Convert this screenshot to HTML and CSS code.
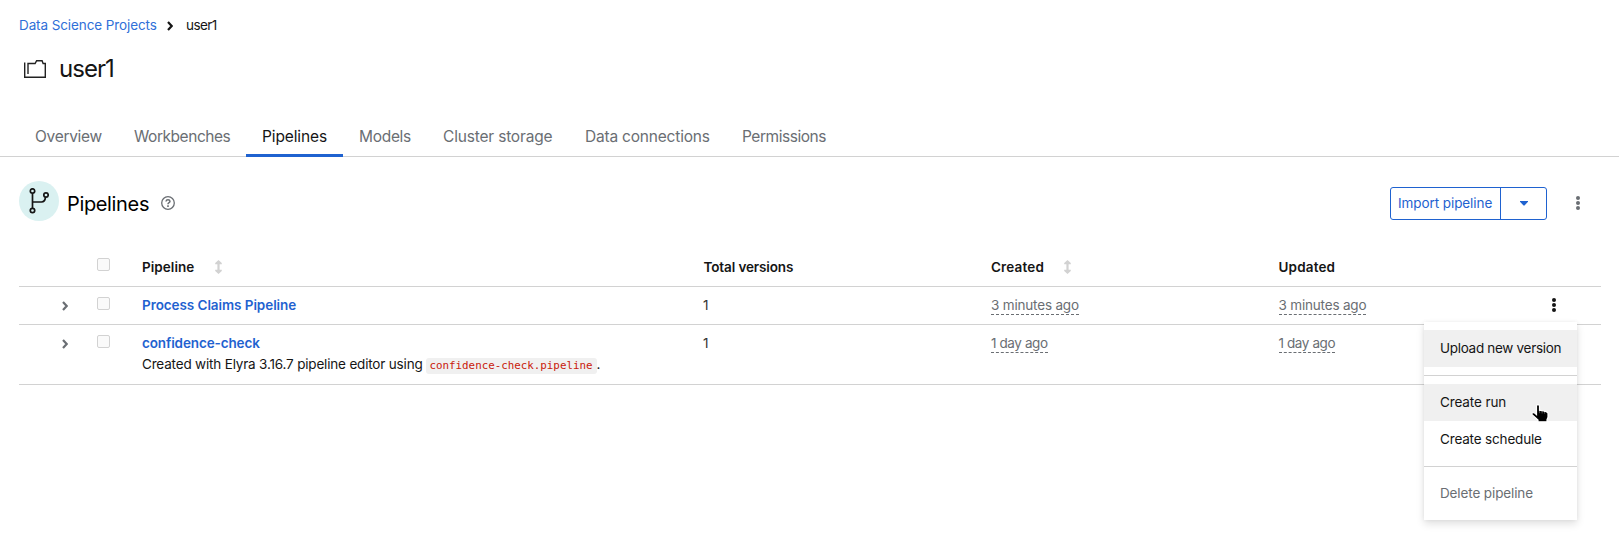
FILE: index.html
```html
<!DOCTYPE html>
<html lang="en">
<head>
<meta charset="utf-8">
<title>user1 - Pipelines</title>
<link rel="stylesheet" href="styles.css">
</head>
<body>
<nav class="crumbs">
  <a class="crumb-link">Data Science Projects</a>
  <svg class="crumb-sep" width="6" height="10" viewBox="0 0 6 10"><path d="M1 1l3.700 4L1 9" fill="none" stroke="#151515" stroke-width="2.200"/></svg>
  <span class="crumb-here">user1</span>
</nav>
<header class="title">
  <svg width="22" height="18" viewBox="0 0 22 18" fill="none"><path d="M.7 2.500v14.800h20.600V3.500h-2.200l-1-2.800h-5.500l-1.500 2.800H4v10.500" stroke="#222" stroke-width="1.400"/></svg>
  <h1 class="project">user1</h1>
</header>
<div class="tabs">
  <a class="tab t-overview">Overview</a>
  <a class="tab t-work">Workbenches</a>
  <a class="tab t-pipe active">Pipelines</a>
  <a class="tab t-models">Models</a>
  <a class="tab t-cluster">Cluster storage</a>
  <a class="tab t-data">Data connections</a>
  <a class="tab t-perm">Permissions</a>
</div>
<section class="toolbar">
  <span class="badge"><svg width="20" height="26" viewBox="0 0 20 26" fill="none" stroke="#151515" stroke-width="1.700"><circle cx="3.500" cy="3" r="2.200"/><circle cx="3.500" cy="22.500" r="2.200"/><circle cx="17" cy="7" r="2.200"/><path d="M3.500 5.200v15.100M3.500 14h9q3.500 0 4-4.800"/></svg></span>
  <h2 class="heading">Pipelines</h2>
  <svg class="help" width="14" height="14" viewBox="0 0 14 14" fill="none" stroke="#6a6e73"><circle cx="7" cy="7" r="6.300" stroke-width="1.300"/><path d="M5 5.500q.2-1.700 2-1.700t2 1.500q0 1-1.200 1.500-.8.400-.8 1.400" stroke-width="1.500"/><path d="M7 9.300v1.600" stroke-width="1.600"/></svg>
  <div class="split"><button class="import">Import pipeline</button><button class="drop"><svg width="8" height="5" viewBox="0 0 8 5"><path d="M0 0h8v.8L4.500 4.500h-1L0 .8z" fill="#1f62d0"/></svg></button></div>
  <svg class="kebab" width="4" height="14" viewBox="0 0 4 14" fill="#6a6e73"><circle cx="2" cy="2" r="2"/><circle cx="2" cy="7" r="2"/><circle cx="2" cy="12" r="2"/></svg>
</section>
<main class="table">
  <div class="row head">
    <span></span><i class="check"></i>
    <div class="cell"><b class="w-pipeline">Pipeline</b><svg class="sort" width="7" height="14" viewBox="0 0 7 14"><path d="M3.500 0L6.800 3v1.200H4.600v5.600h2.200V11L3.500 14 .2 11V9.800h2.200V4.200H.2V3z" fill="#d2d2d2"/></svg></div>
    <div class="cell"><b class="w-total">Total versions</b></div>
    <div class="cell"><b class="w-created">Created</b><svg class="sort" width="7" height="14" viewBox="0 0 7 14"><path d="M3.500 0L6.800 3v1.200H4.600v5.600h2.200V11L3.500 14 .2 11V9.800h2.200V4.200H.2V3z" fill="#d2d2d2"/></svg></div>
    <div class="cell"><b class="w-created">Updated</b></div>
  </div>
  <div class="row">
    <svg class="expand" width="6" height="10" viewBox="0 0 6 10"><path d="M1 1l3.700 4L1 9" fill="none" stroke="#6a6e73" stroke-width="2.200"/></svg><i class="check"></i>
    <div class="cell"><a class="name">Process Claims Pipeline</a></div>
    <div class="cell count">1</div>
    <div class="cell"><span class="ago">3 minutes ago</span></div>
    <div class="cell"><span class="ago">3 minutes ago</span></div>
    <svg class="row-kebab" width="4" height="14" viewBox="0 0 4 14" fill="#151515"><circle cx="2" cy="2" r="2"/><circle cx="2" cy="7" r="2"/><circle cx="2" cy="12" r="2"/></svg>
  </div>
  <div class="row tall">
    <svg class="expand" width="6" height="10" viewBox="0 0 6 10"><path d="M1 1l3.700 4L1 9" fill="none" stroke="#6a6e73" stroke-width="2.200"/></svg><i class="check"></i>
    <div class="cell stack"><a class="name">confidence-check</a><p class="desc"><span class="desc-text">Created with Elyra 3.16.7 pipeline editor using</span><code>confidence-check.pipeline</code>.</p></div>
    <div class="cell count">1</div>
    <div class="cell"><span class="ago day">1 day ago</span></div>
    <div class="cell"><span class="ago day">1 day ago</span></div>
  </div>
</main>
<div class="menu">
  <a class="item lit m-upload">Upload new version</a>
  <hr>
  <a class="item lit">Create run</a>
  <a class="item m-sched">Create schedule</a>
  <hr>
  <a class="item off">Delete pipeline</a>
</div>
<svg class="cursor" width="19" height="20" viewBox="0 0 19 20"><path d="M5.500 2.300Q5.500.7 7 .7t1.500 1.600V6.500q1.700-.6 2.600.4 1.600-.5 2.500.6 1.500-.4 2.300.6 1.100.3 1.100 1.700v3.400l-1 2.500v2.100H7v-1.800L1.300 10.900q-.9-1.500.3-2.200 1.200-.5 2.100.4l1.800 1.600z" fill="#000" stroke="#fff" stroke-width="1.200"/><path d="M8.600 6.800v2.400M11.100 7.300v2.200M13.600 7.900v1.800" stroke="#777" stroke-width=".6"/></svg>
</body>
</html>
```
FILE: styles.css
```css
* { box-sizing: border-box; }
body { margin: 0; height: 537px; overflow: hidden; background: #fff; color: #151515; font: 13.5px/21px Inter, "Liberation Sans", sans-serif; position: relative; }
h1, h2, p { margin: 0; font-weight: 400; }
.crumbs { display: flex; align-items: center; height: 21px; margin: 15px 0 0 19px; }
.crumb-link { width: 138px; color: #2f6fd8; white-space: nowrap; letter-spacing: -.1px; }
.crumb-sep { margin: 0 13px 0 10px; }
.crumb-here { letter-spacing: -.6px; }
.title { display: flex; align-items: center; height: 32px; margin: 17px 0 0 24px; gap: 13px; }
.project { font-size: 24px; line-height: 32px; letter-spacing: -.95px; }
.tabs { display: flex; height: 41px; margin-top: 31px; padding: 0 19px; border-bottom: 1px solid #d2d2d2; }
.tab { height: 41px; padding: 8px 16px; font-size: 15.5px; line-height: 25px; color: #6a6e73; white-space: nowrap; letter-spacing: -.3px; }
.t-overview { width: 99px; }
.t-work { width: 128px; letter-spacing: -.45px; }
.t-pipe { width: 97px; letter-spacing: -.12px; }
.t-models { width: 84px; }
.t-cluster { width: 142px; letter-spacing: -.18px; }
.t-data { width: 157px; letter-spacing: -.2px; }
.t-perm { letter-spacing: -.45px; }
.active { color: #151515; border-bottom: 3px solid #1f62d0; }
.toolbar { display: flex; height: 40px; margin: 24px 39px 0 19px; }
.badge { display: flex; width: 40px; height: 40px; border-radius: 50%; background: #daf1f1; align-items: center; justify-content: center; }
.heading { width: 86px; margin: 8px 0 0 8px; font-size: 20px; line-height: 30px; letter-spacing: -.35px; color: #000; }
.help { margin: 15px 0 0 8px; }
.split { display: flex; margin: 6px 29px 0 auto; width: 157px; height: 33px; border: 1px solid #1f62d0; border-radius: 3px; }
.import, .drop { border: 0; background: none; padding: 0; font: inherit; color: #1f62d0; }
.import { width: 110px; padding: 0 0 1px 7px; text-align: left; white-space: nowrap; letter-spacing: -.08px; border-right: 1px solid #1f62d0; }
.drop { display: flex; flex: 1; align-items: center; justify-content: center; }
.kebab { margin-top: 15px; }
.table { margin: 25px 18px 0 19px; }
.row { display: grid; grid-template-columns: 78px 45px 561.5px 287.5px 287.5px 1fr 49px; height: 38px; border-bottom: 1px solid #d2d2d2; padding-top: 8px; }
.head { height: 41px; padding-top: 11px; }
.tall { height: 60px; }
.cell { display: flex; align-items: flex-start; white-space: nowrap; }
.cell b { font-weight: 600; }
.w-pipeline { width: 53px; letter-spacing: .05px; }
.w-total { letter-spacing: -.12px; }
.w-created { min-width: 53px; letter-spacing: .15px; }
.count { margin-left: -.5px; color: #333; }
.check { width: 13px; height: 13px; margin-top: 2px; border: 1px solid #d2d2d2; border-radius: 2px; background: #fafafa; }
.head .check { margin-top: 1px; }
.sort { margin: 3px 0 0 20px; }
.expand { margin: 6px 0 0 43px; }
.name { color: #1f62d0; font-weight: 600; letter-spacing: -.07px; }
.stack { flex-direction: column; }
.stack .name { letter-spacing: -.12px; }
.ago { color: #6a6e73; height: 20px; border-bottom: 1px dashed #6a6e73; letter-spacing: -.18px; }
.day { letter-spacing: -.4px; }
.row-kebab { margin-top: 3px; }
.desc { display: flex; }
.desc-text { width: 284px; letter-spacing: -.18px; }
code { width: 171px; height: 16px; margin-top: 4px; margin-left: -.5px; padding-left: 4px; border-radius: 3px; background: #f0f0f0; color: #c9190b; font: 10.83px/15px "DejaVu Sans Mono", monospace; }
.menu { position: absolute; left: 1424px; top: 322px; width: 153px; height: 198px; padding-top: 8px; background: #fff; box-shadow: 0 4px 8px rgba(3,3,3,.12), 0 0 4px rgba(3,3,3,.06); }
.item { display: block; height: 37px; padding: 8px 16px; white-space: nowrap; letter-spacing: -.12px; }
.m-upload { letter-spacing: -.3px; }
.m-sched { letter-spacing: -.17px; }
.lit { background: #f0f0f0; }
.off { color: #6a6e73; }
.menu hr { margin: 8px 0; border: 0; height: 1px; background: #d2d2d2; }
.cursor { position: absolute; left: 1531px; top: 404px; }
```
